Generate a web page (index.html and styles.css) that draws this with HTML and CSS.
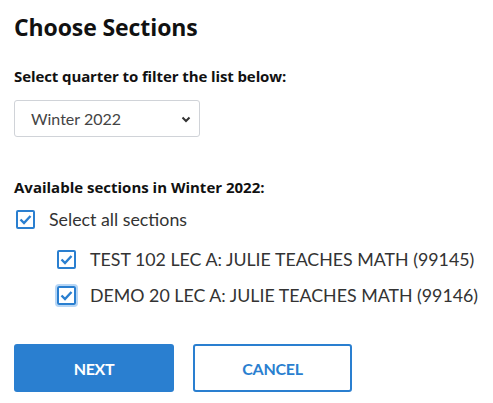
FILE: index.html
```html
<!DOCTYPE html>
<html>
<head>
<meta charset="utf-8">
<link rel="stylesheet" href="styles.css">
</head>
<body>
<div class="page">
  <h1 class="title">Choose Sections</h1>
  <div class="label first">Select quarter to filter the list below:</div>
  <div class="select">
    <span>Winter 2022</span>
    <svg class="chev" width="10" height="7" viewBox="0 0 10 7"><path d="M1.5 1.5 L5 5 L8.5 1.5" fill="none" stroke="#333" stroke-width="2"/></svg>
  </div>
  <div class="label avail">Available sections in Winter 2022:</div>
  <div class="row">
    <span class="cb"><svg width="13" height="11" viewBox="0 0 13 11"><path d="M1.5 5.5 L5 9 L11.5 2" fill="none" stroke="#2a7fd0" stroke-width="2.4"/></svg></span>
    <span class="txt">Select all sections</span>
  </div>
  <div class="row sub">
    <span class="cb"><svg width="13" height="11" viewBox="0 0 13 11"><path d="M1.5 5.5 L5 9 L11.5 2" fill="none" stroke="#2a7fd0" stroke-width="2.4"/></svg></span>
    <span class="txt">TEST 102 LEC A: JULIE TEACHES MATH (99145)</span>
  </div>
  <div class="row sub">
    <span class="cb focus"><svg width="13" height="11" viewBox="0 0 13 11"><path d="M1.5 5.5 L5 9 L11.5 2" fill="none" stroke="#2a7fd0" stroke-width="2.4"/></svg></span>
    <span class="txt">DEMO 20 LEC A: JULIE TEACHES MATH (99146)</span>
  </div>
  <div class="buttons">
    <button class="btn primary">NEXT</button>
    <button class="btn secondary">CANCEL</button>
  </div>
</div>
</body>
</html>
```
FILE: styles.css
```css
html, body { margin: 0; padding: 0; background: #fff; }
body { font-family: Lato, "Open Sans", sans-serif; color: #111; }
.page { padding: 12px 14px; }
.title { font-family: "Open Sans", sans-serif; font-weight: 700; font-size: 23px; margin: 0; line-height: 30px; letter-spacing: -0.1px; }
.label { font-family: "Open Sans", sans-serif; font-weight: 700; font-size: 15px; line-height: 20px; letter-spacing: -0.1px; }
.first { margin-top: 24px; }
.avail { margin-top: 40px; letter-spacing: 0; }
.select { margin-top: 14px; width: 186px; height: 37px; box-sizing: border-box; border: 1px solid #d0d3d8; border-radius: 3px; display: flex; align-items: center; justify-content: space-between; padding: 0 8px 0 16px; font-size: 16px; color: #444; }
.chev { margin-top: 1px; }
.row { display: flex; align-items: center; margin-top: 12px; height: 20px; white-space: nowrap; }
.sub { padding-left: 41px; margin-top: 20px; }
.sub + .sub { margin-top: 16px; }
.cb { flex: none; width: 19px; height: 19px; box-sizing: border-box; border: 2px solid #2a7fd0; border-radius: 2px; display: flex; align-items: center; justify-content: center; margin-left: 2px; }
.cb.focus { box-shadow: 0 0 0 2px #b7d6f5; }
.txt { margin-left: 14px; font-size: 17.8px; color: #333; }
.buttons { display: flex; gap: 19px; margin-top: 39px; }
.btn { width: 160px; height: 48px; border-radius: 3px; font-family: Lato, sans-serif; font-weight: 700; font-size: 16px; letter-spacing: -0.3px; cursor: pointer; }
.primary { background: #2a7fd0; color: #fff; border: none; }
.secondary { background: #fff; color: #2a7fd0; border: 2px solid #2a7fd0; width: 159px; }
```
